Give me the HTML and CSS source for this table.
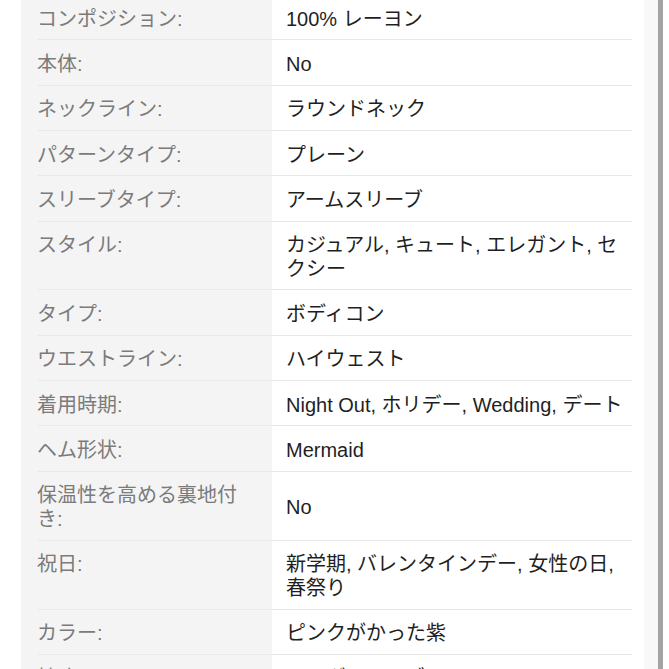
FILE: index.html
```html
<!DOCTYPE html>
<html>
<head>
    <title>商品詳細</title>
    <meta charset="UTF-8">
    <link rel="stylesheet" href="styles.css">
</head>
<body>
    <div class="frame">
        <div class="spec-list">
            <div class="spec-row">
                <div class="spec-label">コンポジション:</div>
                <div class="spec-value">100% レーヨン</div>
            </div>
            <div class="spec-row">
                <div class="spec-label">本体:</div>
                <div class="spec-value">No</div>
            </div>
            <div class="spec-row">
                <div class="spec-label">ネックライン:</div>
                <div class="spec-value">ラウンドネック</div>
            </div>
            <div class="spec-row">
                <div class="spec-label">パターンタイプ:</div>
                <div class="spec-value">プレーン</div>
            </div>
            <div class="spec-row">
                <div class="spec-label">スリーブタイプ:</div>
                <div class="spec-value">アームスリーブ</div>
            </div>
            <div class="spec-row">
                <div class="spec-label">スタイル:</div>
                <div class="spec-value">カジュアル, キュート, エレガント, セクシー</div>
            </div>
            <div class="spec-row">
                <div class="spec-label">タイプ:</div>
                <div class="spec-value">ボディコン</div>
            </div>
            <div class="spec-row">
                <div class="spec-label">ウエストライン:</div>
                <div class="spec-value">ハイウェスト</div>
            </div>
            <div class="spec-row">
                <div class="spec-label">着用時期:</div>
                <div class="spec-value">Night Out, ホリデー, Wedding, デート</div>
            </div>
            <div class="spec-row">
                <div class="spec-label">ヘム形状:</div>
                <div class="spec-value">Mermaid</div>
            </div>
            <div class="spec-row">
                <div class="spec-label">保温性を高める裏地付き:</div>
                <div class="spec-value">No</div>
            </div>
            <div class="spec-row">
                <div class="spec-label">祝日:</div>
                <div class="spec-value">新学期, バレンタインデー, 女性の日, 春祭り</div>
            </div>
            <div class="spec-row">
                <div class="spec-label">カラー:</div>
                <div class="spec-value">ピンクがかった紫</div>
            </div>
            <div class="spec-row">
                <div class="spec-label">袖丈:</div>
                <div class="spec-value">ロングスリーブ</div>
            </div>
        </div>
    </div>
</body>
</html>
```

FILE: styles.css
```css
html, body {
    margin: 0;
    padding: 0;
    background: #fff;
}

body {
    font-family: "Liberation Sans", "Noto Sans CJK JP", sans-serif;
    font-size: 20px;
    overflow: hidden;
}

.frame {
    margin-left: 21px;
    width: 637px;
    height: 669px;
    background: #f8f8f8;
    border-right: 5px solid #a4a4a4;
    overflow: hidden;
}

.spec-list {
    width: 623px;
    margin-top: -5px;
}

.spec-row {
    display: grid;
    grid-template-columns: 251px 1fr;
    background:
        linear-gradient(#e8e8e8, #e8e8e8) no-repeat 17px 100% / 594px 1px,
        linear-gradient(to right, #f4f4f4 251px, #fff 251px);
}

.spec-label,
.spec-value {
    line-height: 23.6px;
    padding: 12.6px 0 9.14px;
}

.spec-label {
    align-self: start;
    padding-left: 16px;
    padding-right: 18px;
    color: #7b7b7b;
}

.spec-value {
    align-self: center;
    padding-left: 14px;
    padding-right: 12px;
    color: #1f1f1f;
}
```
